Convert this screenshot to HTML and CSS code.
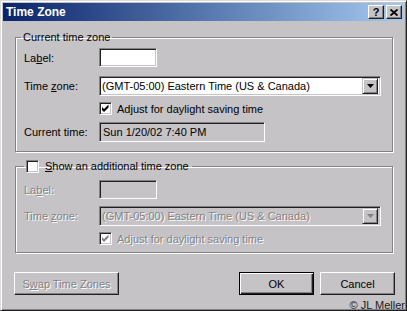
FILE: index.html
```html
<!DOCTYPE html>
<html>
<head>
    <title>Time Zone</title>
    <link rel="stylesheet" href="styles.css">
</head>
<body>
    <div class="window">
        <div class="titlebar">
            <span class="title">Time Zone</span>
            <span class="tb-buttons">
                <span class="tb-btn help">?</span>
                <span class="tb-btn">
                    <svg width="8" height="7" viewBox="0 0 8 7"><path d="M0.5 0.5 L7.5 6.5 M7.5 0.5 L0.5 6.5" stroke="#000" stroke-width="1.8" fill="none"/></svg>
                </span>
            </span>
        </div>

        <div class="content">
            <fieldset class="group">
                <legend class="legend-text">Current time zone</legend>
                <div class="row">
                    <span class="lbl">La<u>b</u>el:</span>
                    <span class="field short"></span>
                </div>
                <div class="row row-select">
                    <span class="lbl">Time <u>z</u>one:</span>
                    <span class="field select">
                        <span class="select-text">(GMT-05:00) Eastern Time (US &amp; Canada)</span>
                        <span class="arrow"><svg width="7" height="4" viewBox="0 0 7 4"><path d="M0 0 H7 L3.5 4 Z" fill="#000"/></svg></span>
                    </span>
                </div>
                <div class="row row-check">
                    <span class="lbl"></span>
                    <span class="check">
                        <svg width="9" height="9" viewBox="0 0 9 9"><path d="M1 3 L3 5 L7.5 0.5 V3.5 L3 8 L1 6 Z" fill="#000"/></svg>
                    </span>
                    <span class="check-text">Ad<u>j</u>ust for daylight saving time</span>
                </div>
                <div class="row row-time">
                    <span class="lbl">Current time:</span>
                    <span class="field readonly">Sun 1/20/02 7:40 PM</span>
                </div>
            </fieldset>

            <fieldset class="group group-two">
                <legend class="legend-check">
                    <span class="check"></span>
                    <span><u>S</u>how an additional time zone</span>
                </legend>
                <div class="row">
                    <span class="lbl disabled">La<u>b</u>el:</span>
                    <span class="field short off"></span>
                </div>
                <div class="row row-select2">
                    <span class="lbl disabled">Time <u>z</u>one:</span>
                    <span class="field select off">
                        <span class="select-text disabled">(GMT-05:00) Eastern Time (US &amp; Canada)</span>
                        <span class="arrow"><svg width="7" height="4" viewBox="0 0 7 4"><path d="M0 0 H7 L3.5 4 Z" fill="#848284"/></svg></span>
                    </span>
                </div>
                <div class="row row-check">
                    <span class="lbl"></span>
                    <span class="check off">
                        <svg width="9" height="9" viewBox="0 0 9 9"><path d="M1 3 L3 5 L7.5 0.5 V3.5 L3 8 L1 6 Z" fill="#848284"/></svg>
                    </span>
                    <span class="check-text disabled">Ad<u>j</u>ust for daylight saving time</span>
                </div>
            </fieldset>
        </div>

        <div class="buttons">
            <span class="btn swap disabled">S<u>w</u>ap Time Zones</span>
            <span class="btn-pair">
                <span class="btn default">OK</span>
                <span class="btn">Cancel</span>
            </span>
        </div>

        <span class="credit">&copy; JL Meller</span>
    </div>
</body>
</html>
```

FILE: styles.css
```css
body {
    margin: 0;
    padding: 0;
    background-color: #c6c3c6;
    font-family: "Liberation Sans", Arial, sans-serif;
    font-size: 11px;
    color: #000;
}
.window {
    position: relative;
    width: 407px;
    height: 311px;
    box-sizing: border-box;
    padding: 2px;
    background-color: #c6c3c6;
    border: 1px solid;
    border-color: #dedbde #212021 #212021 #dedbde;
    box-shadow: inset 1px 1px #fff, inset -1px -1px #848284;
    overflow: hidden;
}
.titlebar {
    height: 18px;
    display: flex;
    align-items: center;
    justify-content: space-between;
    padding: 0 2px 0 3px;
    background: linear-gradient(to right, #08246b, #a5caf0);
}
.title {
    color: #fff;
    font-weight: bold;
    font-size: 12px;
}
.tb-buttons {
    display: flex;
    gap: 2px;
}
.tb-btn {
    width: 16px;
    height: 14px;
    box-sizing: border-box;
    display: flex;
    align-items: center;
    justify-content: center;
    background-color: #c6c3c6;
    border: 1px solid;
    border-color: #fff #212021 #212021 #fff;
    box-shadow: inset -1px -1px #848284;
}
.help {
    font-weight: bold;
    font-size: 11px;
    line-height: 12px;
}
.content {
    padding: 10px 11px 0 12px;
}
.group {
    margin: 0;
    padding: 4px 11px 9px 8px;
    min-width: 0;
    border: 1px solid #848284;
    box-shadow: inset 1px 1px #fff, 1px 1px #fff;
}
.legend-text {
    margin-left: -3px;
    padding: 0 2px;
    line-height: 13px;
}
.group-two {
    margin-top: 7px;
    padding-top: 6px;
    padding-bottom: 6px;
}
.legend-check {
    display: flex;
    align-items: center;
    gap: 6px;
    margin-left: 0;
    padding: 0 3px 0 2px;
    height: 15px;
    line-height: 13px;
}
.row {
    display: flex;
    align-items: center;
}
.row-select {
    margin-top: 9px;
}
.row-select2 {
    margin-top: 7px;
}
.row-check {
    margin-top: 5px;
    height: 15px;
}
.row-time {
    margin-top: 6px;
}
.lbl {
    width: 75px;
    flex-shrink: 0;
}
.field {
    height: 20px;
    box-sizing: border-box;
    display: flex;
    align-items: center;
    padding-left: 3px;
    background-color: #fff;
    border: 1px solid;
    border-color: #848284 #fff #fff #848284;
    box-shadow: inset 1px 1px #212021, inset -1px -1px #c6c3c6;
}
.short {
    width: 58px;
    height: 19px;
}
.select {
    flex: 1;
    padding: 0 2px 0 2px;
}
.select-text {
    flex: 1;
}
.arrow {
    width: 16px;
    height: 16px;
    box-sizing: border-box;
    display: flex;
    align-items: center;
    justify-content: center;
    background-color: #c6c3c6;
    border: 1px solid;
    border-color: #c6c3c6 #212021 #212021 #c6c3c6;
    box-shadow: inset 1px 1px #fff, inset -1px -1px #848284;
}
.readonly {
    width: 166px;
    background-color: #c6c3c6;
}
.off {
    background-color: #c6c3c6;
}
.check {
    width: 13px;
    height: 13px;
    box-sizing: border-box;
    display: inline-flex;
    align-items: center;
    justify-content: center;
    flex-shrink: 0;
    background-color: #fff;
    border: 1px solid;
    border-color: #848284 #fff #fff #848284;
    box-shadow: inset 1px 1px #212021, inset -1px -1px #c6c3c6;
}
.check-text {
    margin-left: 5px;
}
.disabled {
    color: #848284;
    text-shadow: 1px 1px #fff;
}
.buttons {
    display: flex;
    justify-content: space-between;
    margin-top: 19px;
    padding: 0 9px 0 11px;
}
.btn-pair {
    display: flex;
    gap: 6px;
}
.btn {
    width: 75px;
    height: 23px;
    box-sizing: border-box;
    display: flex;
    align-items: center;
    justify-content: center;
    background-color: #c6c3c6;
    border: 1px solid;
    border-color: #fff #212021 #212021 #fff;
    box-shadow: inset -1px -1px #848284;
}
.swap {
    width: 105px;
}
.default {
    border: 1px solid #000;
    box-shadow: inset 1px 1px #fff, inset -1px -1px #212021, inset -2px -2px #848284;
}
.credit {
    position: absolute;
    right: 1px;
    bottom: -1px;
    font-size: 11px;
    line-height: 12px;
    color: #212021;
}
```
